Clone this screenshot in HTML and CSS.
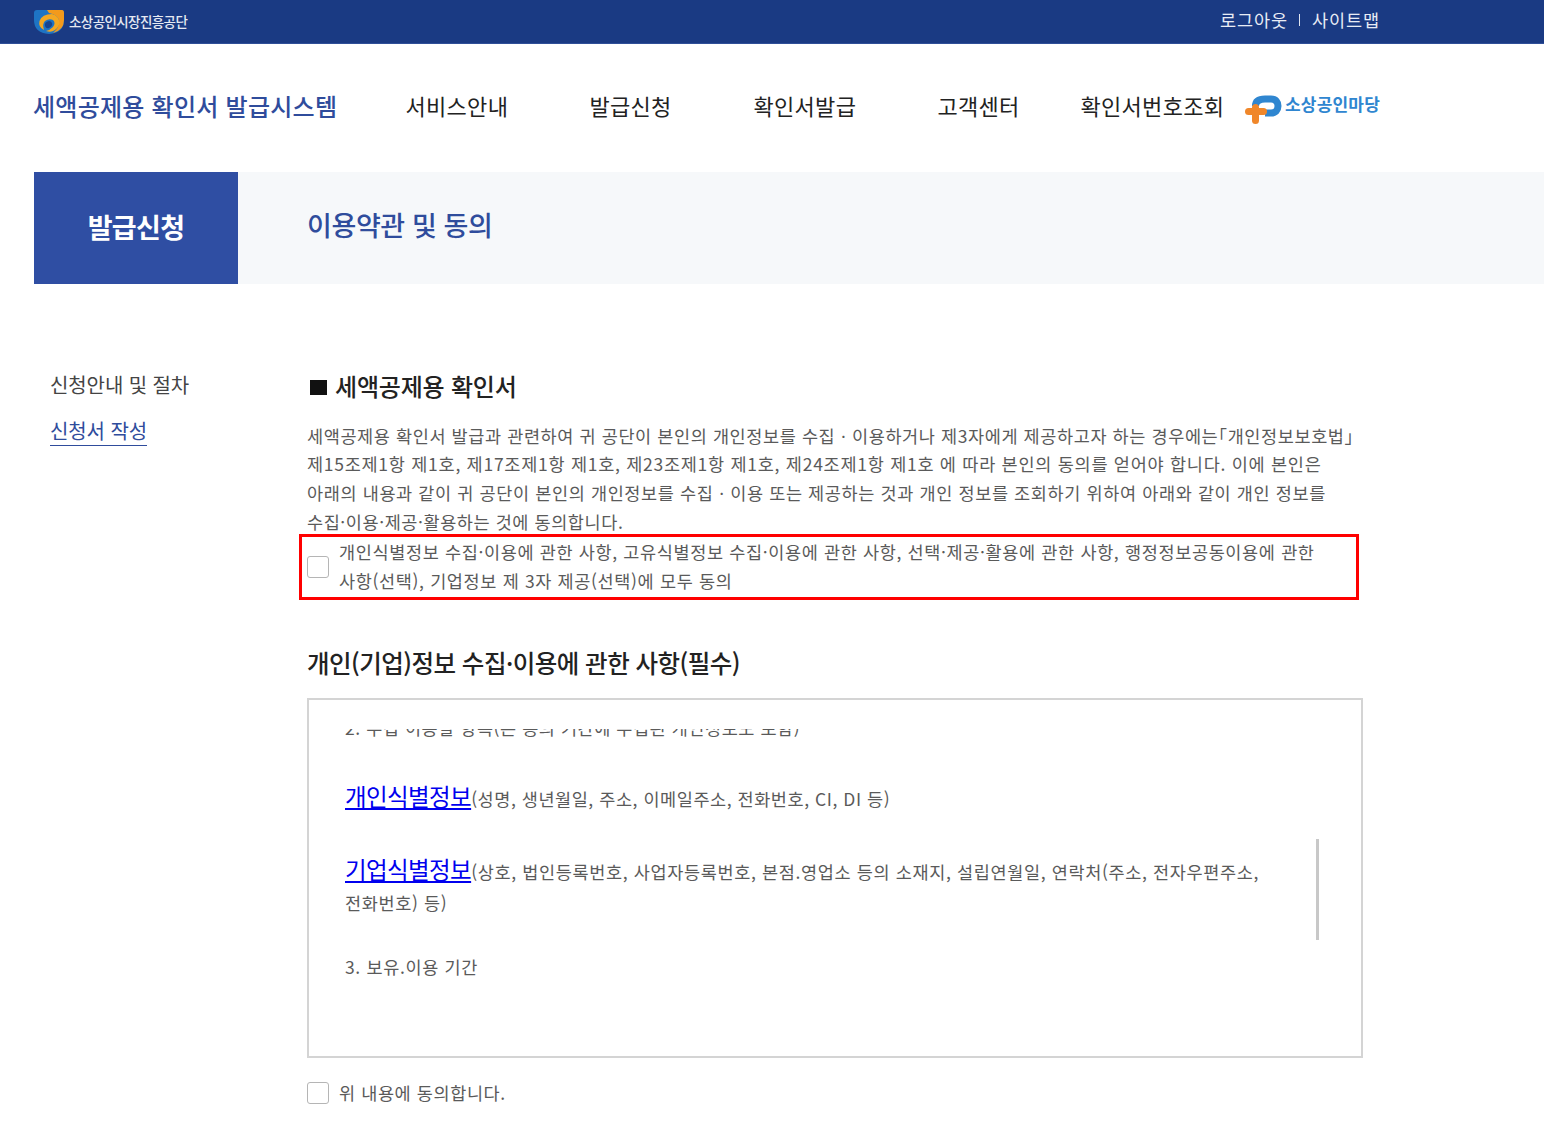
FILE: index.html
```html
<!DOCTYPE html>
<html lang="ko">
<head>
<meta charset="utf-8">
<title>세액공제용 확인서 발급시스템</title>
<link rel="stylesheet" href="styles.css">
</head>
<body>
<div class="topbar">
  <div class="topbar-in">
    <div class="org">
      <svg class="org-logo" width="30" height="24" viewBox="0 0 30 24">
        <path d="M0 3 Q0 0 3 0 H27 Q30 0 30 3 V10 Q30 23 15 24 Q0 23 0 10 Z" fill="#1e74c4"/>
        <path d="M13 0 H28 Q30 0 30 3 V10 Q30 20 19 23 Q25 18 25 12 Q25 5 15 3 Z" fill="#f39a1c"/>
        <path d="M18 4 Q8 4 5.5 11 Q4 17 10 20 Q8 14 11 11 Q15 8 19 10 Q22 13 19 17 Q16 20 12 21 Q17 23 21 20 Q27 15 25 10 Q23 5 18 4 Z" fill="#f5a821"/>
        <path d="M15 11 Q10 12 11 16 Q12 19 15 18 Q19 16 18 13 Q17 11 15 11 Z" fill="#17448f"/>
      </svg>
      <span class="org-name">소상공인시장진흥공단</span>
    </div>
    <div class="util"><span>로그아웃</span><i class="util-sep"></i><span>사이트맵</span></div>
  </div>
</div>
<header class="gnb">
  <div class="brand">세액공제용 확인서 발급시스템</div>
  <nav class="menu">
    <span class="m1">서비스안내</span>
    <span class="m2">발급신청</span>
    <span class="m3">확인서발급</span>
    <span class="m4">고객센터</span>
    <span class="m5">확인서번호조회</span>
  </nav>
  <div class="market">
    <svg class="market-logo" width="38" height="32" viewBox="0 0 38 32">
      <path d="M11.5 13 C11.5 8 15 6 21 6 H27 C32 6 34 9 34 13 C34 17 31.5 20 27 20 H21" fill="none" stroke="#2f86d0" stroke-width="7"/>
      <rect x="1" y="15" width="22" height="7" rx="3.5" fill="#f0872a"/>
      <rect x="8" y="11" width="7" height="20" rx="3.5" fill="#f0872a"/>
    </svg>
    <span class="market-name">소상공인마당</span>
  </div>
</header>
<section class="hero">
  <div class="hero-tab">발급신청</div>
  <h1 class="hero-title">이용약관 및 동의</h1>
</section>
<main class="content">
  <aside class="side">
    <a class="side-item">신청안내 및 절차</a>
    <a class="side-item active">신청서 작성</a>
  </aside>
  <div class="body">
    <h2 class="h-main"><span class="sq"></span>세액공제용 확인서</h2>
    <p class="lead">
      <span class="ln ln-a">세액공제용 확인서 발급과 관련하여 귀 공단이 본인의 개인정보를 수집ㆍ이용하거나 제3자에게 제공하고자 하는 경우에는&#xFF62;개인정보보호법&#xFF63;</span>
      <span class="ln ln-num">제15조제1항 제1호, 제17조제1항 제1호, 제23조제1항 제1호, 제24조제1항 제1호 에 따라 본인의 동의를 얻어야 합니다. 이에 본인은</span>
      <span class="ln ln-c">아래의 내용과 같이 귀 공단이 본인의 개인정보를 수집ㆍ이용 또는 제공하는 것과 개인 정보를 조회하기 위하여 아래와 같이 개인 정보를</span>
      <span class="ln">수집·이용·제공·활용하는 것에 동의합니다.</span>
    </p>
    <label class="agree-all">
      <span class="chk"></span>
      <span>개인식별정보 수집·이용에 관한 사항, 고유식별정보 수집·이용에 관한 사항, 선택·제공·활용에 관한 사항, 행정정보공동이용에 관한<br>사항(선택), 기업정보 제 3자 제공(선택)에 모두 동의</span>
    </label>
    <h3 class="h-sub">개인(기업)정보 수집·이용에 관한 사항(필수)</h3>
    <div class="terms">
      <div class="clip"><div class="clip-line">2. 수집 이용할 항목(본 동의 기간에 수집된 개인정보도 포함)</div></div>
      <p class="t-row first"><a class="t-link">개인식별정보</a>(성명, 생년월일, 주소, 이메일주소, 전화번호, CI, DI 등)</p>
      <p class="t-row second"><a class="t-link">기업식별정보</a>(상호, 법인등록번호, 사업자등록번호, 본점.영업소 등의 소재지, 설립연월일, 연락처(주소, 전자우편주소,<br>전화번호) 등)</p>
      <p class="t-plain">3. 보유.이용 기간</p>
      <span class="scrollbar"></span>
    </div>
    <label class="agree-one"><span class="chk"></span><span>위 내용에 동의합니다.</span></label>
  </div>
</main>
</body>
</html>
```

FILE: styles.css
```css
* { box-sizing: border-box; }
html, body { margin: 0; padding: 0; }
body {
  width: 1544px;
  height: 1125px;
  overflow: hidden;
  background: #fff;
  font-family: "Noto Sans CJK KR", "Noto Sans", sans-serif;
  color: #5a5a5a;
}
.topbar { height: 44px; background: #1a3a83; border-bottom: 1px solid #2f4f98; }
.topbar-in { width: 1346px; margin-left: 34px; height: 41px; display: flex; justify-content: space-between; align-items: center; }
.org { display: flex; align-items: center; gap: 5px; }
.org-logo { display: block; margin-top: 3px; }
.org-name { font-size: 13.5px; font-weight: 500; color: #e6e9f2; letter-spacing: -0.6px; }
.util { display: flex; align-items: center; color: #e8ecf5; font-size: 17.5px; line-height: 20px; letter-spacing: 0.9px; margin-top: -2px; }
.util-sep { width: 1px; height: 12px; background: #dfe4f0; margin: 0 12px 0 11px; }

.gnb { height: 128px; padding: 0 0 0 33px; display: flex; align-items: center; }
.gnb > * { margin-top: -6px; }
.brand { width: 372.5px; font-size: 24px; font-weight: 500; color: #2f4c9c; letter-spacing: 0.25px; white-space: nowrap; }
.menu { display: flex; font-size: 22px; color: #222; letter-spacing: 0.3px; white-space: nowrap; }
.m1 { width: 184px; }
.m2 { width: 164px; }
.m3 { width: 184px; }
.m4 { width: 143px; }
.m5 { width: 163.5px; }
.market { display: flex; align-items: center; gap: 3px; margin-top: 0; }
.market-logo { margin-top: 2px; }
.market-name { font-size: 17px; font-weight: 700; color: #2f86d0; letter-spacing: 0.2px; margin-top: -10px; }

.hero { margin-left: 34px; height: 112px; background: #f6f8fa; display: flex; align-items: center; }
.hero-tab { width: 204px; height: 112px; padding-bottom: 4px; background: #2f4ea3; color: #fff; font-size: 27px; font-weight: 700; letter-spacing: -0.7px; display: flex; align-items: center; justify-content: center; }
.hero-title { margin: -8px 0 0 69px; font-size: 27px; font-weight: 500; color: #2f4c9c; letter-spacing: -0.4px; }

.content { display: flex; padding-left: 50px; }
.side { width: 257px; padding-top: 86px; display: flex; flex-direction: column; align-items: flex-start; gap: 16px; }
.side-item { font-size: 20px; line-height: 30px; color: #444; letter-spacing: -0.1px; }
.side-item.active { color: #2f4c9c; border-bottom: 1px solid #2f4c9c; line-height: 29px; }
.body { width: 1056px; padding-top: 84px; }
.h-main { margin: 0; font-size: 24px; line-height: 36px; font-weight: 500; color: #222; letter-spacing: -0.2px; display: flex; align-items: center; }
.sq { width: 17px; height: 15px; background: #111; margin: 2px 8px 0 3px; }
.lead { margin: 17.5px 0 0; font-size: 17.5px; line-height: 28.7px; letter-spacing: 0.58px; white-space: nowrap; }
.ln { display: block; }
.ln-a { letter-spacing: 0.6px; }
.ln-num { letter-spacing: 0.73px; }
.ln-c { letter-spacing: 0.62px; }
.agree-all {
  display: flex; align-items: center; gap: 10px;
  width: 1060px; height: 66px; margin: -2.5px 0 0 -8px; padding-left: 5px;
  border: 3px solid #f00; font-size: 17.5px; line-height: 28.7px; letter-spacing: 0.64px; white-space: nowrap;
}
.chk { flex: none; width: 22px; height: 22px; border: 1px solid #b5b5b5; border-radius: 3px; background: #fff; }
.h-sub { margin: 45px 0 0; font-size: 24.5px; line-height: 36px; font-weight: 500; color: #222; letter-spacing: -0.52px; }
.terms { position: relative; width: 1056px; height: 360px; margin-top: 17px; border: 2px solid #d4d4d4; padding: 29px 0 0 36px; }
.clip { height: 9px; overflow: hidden; font-size: 17.5px; line-height: 24px; letter-spacing: 0.55px; }
.clip-line { margin-top: -13px; white-space: nowrap; }
.t-row { margin: 0; font-size: 17.5px; line-height: 31px; letter-spacing: 0.55px; white-space: nowrap; }
.first { margin-top: 43px; }
.second { margin-top: 40px; letter-spacing: 0.64px; }
.t-link { font-size: 23.5px; color: #00e; text-decoration: underline; letter-spacing: -0.6px; }
.t-plain { margin: 34px 0 0; font-size: 17.5px; line-height: 30px; letter-spacing: 0.65px; }
.scrollbar { position: absolute; left: 1007px; top: 139px; width: 3px; height: 101px; background: #c8c8c8; }
.agree-one { display: flex; align-items: center; gap: 10px; margin-top: 23px; font-size: 17.5px; line-height: 24px; letter-spacing: 0.6px; }
```
